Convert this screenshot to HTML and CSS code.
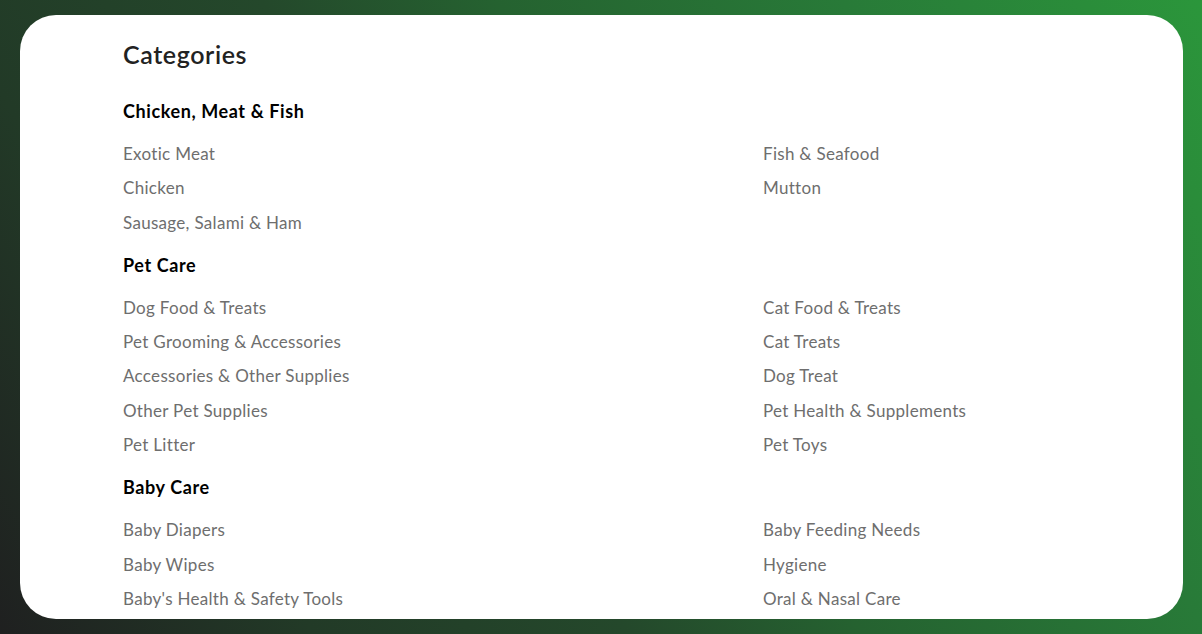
FILE: index.html
```html
<html>
<head>
<link rel="stylesheet" href="styles.css">
</head>
<body>
<div class="card">
    <h2 class="title">Categories</h2>

    <div class="group">
        <h3>Chicken, Meat &amp; Fish</h3>
        <ul class="items">
            <li>Exotic Meat</li>
            <li>Fish &amp; Seafood</li>
            <li>Chicken</li>
            <li>Mutton</li>
            <li>Sausage, Salami &amp; Ham</li>
        </ul>
    </div>

    <div class="group">
        <h3>Pet Care</h3>
        <ul class="items">
            <li>Dog Food &amp; Treats</li>
            <li>Cat Food &amp; Treats</li>
            <li>Pet Grooming &amp; Accessories</li>
            <li>Cat Treats</li>
            <li>Accessories &amp; Other Supplies</li>
            <li>Dog Treat</li>
            <li>Other Pet Supplies</li>
            <li>Pet Health &amp; Supplements</li>
            <li>Pet Litter</li>
            <li>Pet Toys</li>
        </ul>
    </div>

    <div class="group">
        <h3>Baby Care</h3>
        <ul class="items">
            <li>Baby Diapers</li>
            <li>Baby Feeding Needs</li>
            <li>Baby Wipes</li>
            <li>Hygiene</li>
            <li>Baby's Health &amp; Safety Tools</li>
            <li>Oral &amp; Nasal Care</li>
        </ul>
    </div>
</div>
</body>
</html>
```

FILE: styles.css
```css
html, body {
    height: 100%;
}
body {
    margin: 0;
    font-family: Lato, "Liberation Sans", sans-serif;
    background: linear-gradient(60deg, #1f2020 0%, #223a27 20%, #24482b 40%, #256230 55%, #287a38 77%, #2b963b 100%);
    padding: 15px 19px 15px 20px;
    box-sizing: border-box;
}
.card {
    background: #fff;
    border-radius: 36px;
    height: 604px;
    overflow: hidden;
    padding: 24px 0 0 103px;
    box-sizing: border-box;
}
.title {
    margin: 0 0 30px 0;
    font-size: 25px;
    line-height: 30px;
    font-weight: 600;
    letter-spacing: 0.6px;
    color: #222;
}
.group {
    margin-bottom: 13px;
}
.group h3 {
    margin: 0 0 14px 0;
    font-size: 18px;
    line-height: 24px;
    font-weight: 700;
    letter-spacing: 0.6px;
    color: #000;
}
.items {
    list-style: none;
    margin: 0;
    padding: 0;
    display: grid;
    grid-template-columns: 640px 1fr;
}
.items li {
    font-size: 17px;
    line-height: 34.3px;
    letter-spacing: 0.3px;
    color: #6e6e6e;
}
```
